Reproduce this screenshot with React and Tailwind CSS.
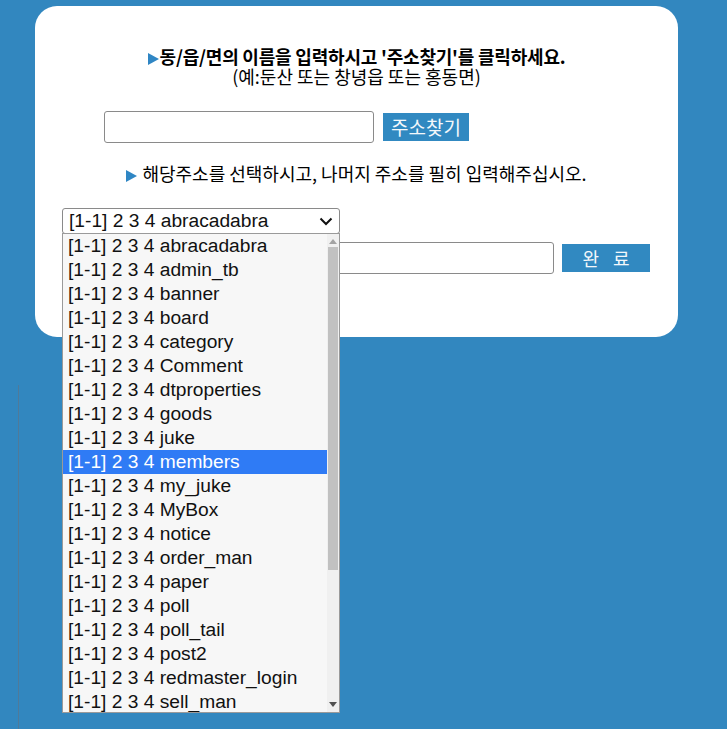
import React from "react";

const items = [
  "abracadabra",
  "admin_tb",
  "banner",
  "board",
  "category",
  "Comment",
  "dtproperties",
  "goods",
  "juke",
  "members",
  "my_juke",
  "MyBox",
  "notice",
  "order_man",
  "paper",
  "poll",
  "poll_tail",
  "post2",
  "redmaster_login",
  "sell_man",
];

function Tri() {
  return (
    <svg width="11" height="12" viewBox="0 0 11 12" className="inline-block mr-[1px] align-[-1px]">
      <polygon points="0,0 11,6 0,12" fill="#2f86c4" />
    </svg>
  );
}

export default function App() {
  return (
    <div className="relative min-h-[729px] bg-[#3287bf] pt-[6px] font-['Noto_Sans_CJK_KR',sans-serif] text-black">
      <div className="ml-[35px] w-[643px] h-[331px] bg-white rounded-[22px] pt-[40px]">
        <p className="text-center text-[18px] leading-[20px] font-bold tracking-[-0.2px]">
          <Tri />동/읍/면의 이름을 입력하시고 '주소찾기'를 클릭하세요.
        </p>
        <p className="text-center text-[18px] leading-[20px]">
          (예:둔산 또는 창녕읍 또는 홍동면)
        </p>
        <div className="mt-[25px] ml-[69px] flex items-center">
          <div className="w-[270px] h-[32px] border border-[#8a8a8a] rounded-[3px] bg-white" />
          <div className="ml-[9px] w-[86px] h-[28px] bg-[#3189c1] text-[#f4f8fb] text-[19px] leading-[28px] text-center">
            주소찾기
          </div>
        </div>
        <p className="mt-[20px] text-center text-[18px] leading-[20px]">
          <Tri /> 해당주소를 선택하시고, 나머지 주소를 필히 입력해주십시오.
        </p>
        <div className="mt-[25px] ml-[27px] w-[278px] h-[26px] border border-[#8a8a8a] rounded-[3px] bg-white flex items-center pl-[6px] pr-[6px] font-['Liberation_Sans',sans-serif] text-[19.2px] leading-[24px] text-[#111]">
          <span className="flex-1">[1-1] 2 3 4 abracadabra</span>
          <svg width="14" height="9" viewBox="0 0 14 9">
            <polyline points="1.5,1.5 7,7 12.5,1.5" fill="none" stroke="#111" strokeWidth="2" />
          </svg>
        </div>
        <div className="mt-[8px] ml-[69px] flex items-center">
          <div className="w-[450px] h-[32px] border border-[#8a8a8a] rounded-[3px] bg-white" />
          <div className="ml-[8px] w-[88px] h-[28px] bg-[#3189c1] text-[#f4f8fb] text-[18px] leading-[28px] text-center tracking-[5px] pl-[5px]">
            완 료
          </div>
        </div>
      </div>
      <div className="mt-[48px] ml-[18px] w-px h-[344px] bg-[#4f7a99]" />

      <div className="absolute left-[62px] top-[233px] w-[278px] h-[480px] border border-[#9a9a9a] bg-[#f7f7f7] overflow-hidden font-['Liberation_Sans',sans-serif] text-[19.2px] leading-[24px] text-[#111]">
        <div className="mr-[12px]">
          {items.map((name) => (
            <div
              key={name}
              className={
                name === "members"
                  ? "h-[24px] pl-[5px] bg-[#2f7bf5] text-white whitespace-nowrap"
                  : "h-[24px] pl-[5px] whitespace-nowrap"
              }
            >
              [1-1] 2 3 4 {name}
            </div>
          ))}
        </div>
        <div className="absolute right-0 top-0 bottom-0 w-[12px] bg-[#f0f0f0] flex flex-col items-center">
          <svg width="8" height="5" viewBox="0 0 8 5" className="mt-[5px]">
            <polygon points="0,5 4,0 8,5" fill="#a3a3a3" />
          </svg>
          <div className="mt-[3px] w-[10px] h-[323px] bg-[#c1c1c1]" />
          <div className="flex-1" />
          <svg width="8" height="5" viewBox="0 0 8 5" className="mb-[5px]">
            <polygon points="0,0 8,0 4,5" fill="#505050" />
          </svg>
        </div>
      </div>
    </div>
  );
}
